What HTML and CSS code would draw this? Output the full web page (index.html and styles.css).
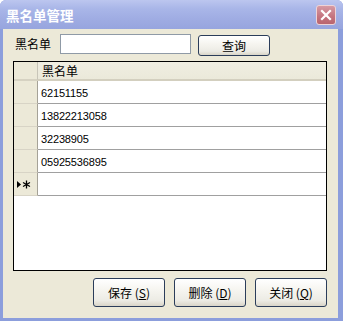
FILE: index.html
```html
<!DOCTYPE html>
<html>
<head>
<meta charset="utf-8">
<link rel="stylesheet" href="styles.css">
</head>
<body>
<div class="win">
  <div class="titlebar">
    <span class="title">黑名单管理</span>
    <span class="close">
      <svg width="12" height="12" viewBox="0 0 12 12"><path d="M2 2 L10 10 M10 2 L2 10" stroke="#fff" stroke-width="2.2" stroke-linecap="square"/></svg>
    </span>
  </div>
  <div class="body">
    <div class="search">
      <span class="label">黑名单</span>
      <input class="field" type="text">
      <button class="btn query">查询</button>
    </div>
    <div class="grid">
      <div class="row head"><div class="rh"></div><div class="cell">黑名单</div></div>
      <div class="row"><div class="rh"></div><div class="cell num">62151155</div></div>
      <div class="row"><div class="rh"></div><div class="cell num">13822213058</div></div>
      <div class="row"><div class="rh"></div><div class="cell num">32238905</div></div>
      <div class="row"><div class="rh"></div><div class="cell num">05925536895</div></div>
      <div class="row"><div class="rh mark">
        <svg width="14" height="9" viewBox="0 0 14 9"><path d="M0 1 L4 4.5 L0 8 Z" fill="#000"/><path d="M9.5 0.5 V8.5 M6 2.5 L13 6.5 M6 6.5 L13 2.5" stroke="#000" stroke-width="1.3"/></svg>
      </div><div class="cell"></div></div>
    </div>
    <div class="actions">
      <button class="btn act">保存 (<u>S</u>)</button>
      <button class="btn act">删除 (<u>D</u>)</button>
      <button class="btn act">关闭 (<u>Q</u>)</button>
    </div>
  </div>
</div>
</body>
</html>
```

FILE: styles.css
```css
* { box-sizing: border-box; }
html, body { margin: 0; padding: 0; background: #fff; }
body { font-family: "Liberation Sans", "Noto Sans CJK SC", sans-serif; font-size: 12px; color: #000; }

.win {
  width: 343px;
  height: 321px;
  background: #8c9edc;
  display: flex;
  flex-direction: column;
  border-radius: 6px 6px 0 0;
  overflow: hidden;
}

.titlebar {
  height: 29px;
  flex: none;
  display: flex;
  align-items: center;
  justify-content: space-between;
  padding: 0 7px 0 6px;
  background: linear-gradient(to bottom, #bcc6ef 0%, #a9b6e8 30%, #9eabe2 70%, #97a5de 100%);
}
.title {
  color: #fff;
  font-family: "Noto Sans CJK SC", sans-serif;
  font-weight: bold;
  font-size: 13.5px;
}
.close {
  width: 20px;
  height: 20px;
  border: 1px solid #eed3d6;
  border-radius: 3px;
  background: linear-gradient(to bottom, #d69aa3, #c4737e 60%, #b9656f);
  display: flex;
  align-items: center;
  justify-content: center;
}

.body {
  flex: 1;
  margin: 0 5px 3px 3px;
  background: #ece9d8;
  display: flex;
  flex-direction: column;
}

.search {
  display: flex;
  align-items: flex-start;
  height: 22px;
  margin-top: 5px;
  padding-left: 12px;
}
.label {
  width: 45px;
  line-height: 20px;
  font-family: "Noto Sans CJK SC", sans-serif;
  font-size: 12px;
}
.field {
  width: 131px;
  height: 20px;
  border: 1px solid #8f9aa6;
  background: #fff;
  margin: 0;
  padding: 0 3px;
}
.btn {
  font-family: "Noto Sans CJK SC", sans-serif;
  font-size: 12px;
  color: #000;
  border: 1px solid #2b3d5a;
  border-radius: 3px;
  background: linear-gradient(to bottom, #ffffff 0%, #f6f5f0 40%, #ecebe4 80%, #d9d5c8 100%);
  padding: 0;
  margin: 0;
}
.query {
  width: 72px;
  height: 21px;
  margin-left: 7px;
  margin-top: 1px;
  line-height: 17px;
}

.grid {
  margin: 5px 0 0 10px;
  width: 314px;
  height: 210px;
  border: 1px solid #000;
  background: #fff;
  display: flex;
  flex-direction: column;
}
.row {
  display: flex;
  height: 23px;
  flex: none;
}
.row.head {
  height: 19px;
}
.rh {
  width: 24px;
  flex: none;
  background: #ece9d8;
  border-right: 1px solid #a5a297;
  border-bottom: 1px solid #d8d4c6;
}
.head .rh {
  border-bottom: 2px solid #d6d2c2;
  border-right: 1px solid #c8c5b8;
}
.cell {
  flex: 1;
  border-bottom: 1px solid #a0a0a0;
  padding-left: 3px;
  display: flex;
  align-items: center;
}
.head .cell {
  background: linear-gradient(to bottom, #f0eee2, #ebe9da);
  border-bottom: 2px solid #d3cfbf;
  font-family: "Noto Sans CJK SC", sans-serif;
  font-size: 12px;
  padding-left: 4px;
}
.num {
  font-size: 11px;
  letter-spacing: -0.15px;
  padding-top: 1px;
}
.mark {
  display: flex;
  align-items: center;
  padding-left: 3px;
}

.actions {
  display: flex;
  justify-content: flex-end;
  gap: 9px;
  margin-top: 7px;
  padding-right: 11px;
}
.act {
  width: 72px;
  height: 29px;
  line-height: 27px;
}
.act u { text-underline-offset: 1px; }
```
